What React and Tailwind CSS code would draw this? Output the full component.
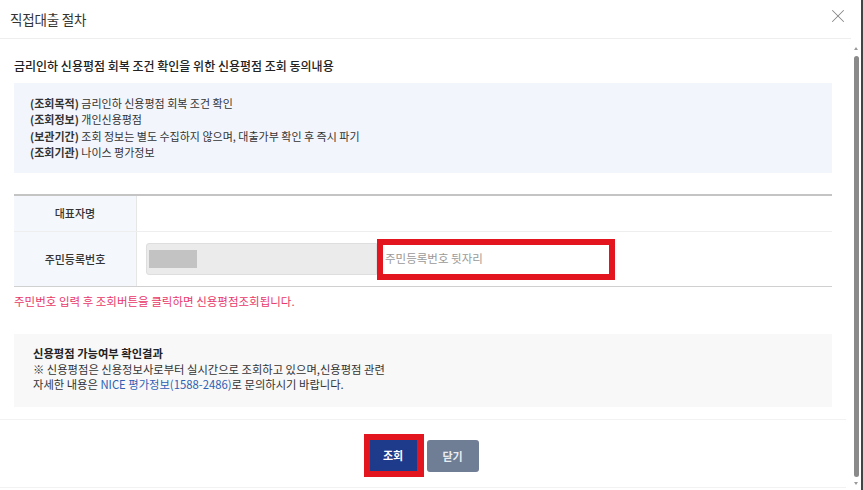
import React from 'react';
import { X } from 'lucide-react';

const infoLines = [
    ['(조회목적)', '금리인하 신용평점 회복 조건 확인'],
    ['(조회정보)', '개인신용평점'],
    ['(보관기간)', '조회 정보는 별도 수집하지 않으며, 대출가부 확인 후 즉시 파기'],
    ['(조회기관)', '나이스 평가정보'],
];

const App = () => {
    return (
        <div className="w-[863px] h-[490px] bg-white flex overflow-hidden text-[#333] font-['Noto_Sans_CJK_KR','Noto_Sans',sans-serif]">
            {/* Modal content */}
            <div className="w-[851px] flex flex-col">
                {/* Header */}
                <div className="h-[39px] shrink-0 flex items-center justify-between pl-[10px] pr-[2px] border-b border-[#eeeeee]">
                    <h2 className="text-[13.5px] text-[#333] tracking-[-0.2px]">직접대출 절차</h2>
                    <X size={22} strokeWidth={1.1} className="text-[#888] -mt-[6px]" />
                </div>

                <div className="flex-1 px-[14px] pr-[19px]">
                    <p className="pt-[18px] text-[12px] leading-[18px] font-medium text-[#222]">
                        금리인하 신용평점 회복 조건 확인을 위한 신용평점 조회 동의내용
                    </p>

                    {/* Info box */}
                    <div className="mt-[8px] h-[90px] bg-[#f2f6fc] pt-[12px] px-[16px] text-[11px] leading-[16.3px] text-[#333]">
                        {infoLines.map(([label, text]) => (
                            <div key={label}>
                                <span className="font-semibold">{label}</span> {text}
                            </div>
                        ))}
                    </div>

                    {/* Table */}
                    <div className="mt-[21px] border-t-2 border-[#c4c4c4] border-b border-b-[#d0d0d0] text-[11px]">
                        <div className="flex h-[36px] border-b border-[#eeeeee]">
                            <div className="w-[123px] shrink-0 bg-[#f4f7fc] border-r border-[#e6e6e6] flex items-center justify-center font-medium">
                                대표자명
                            </div>
                            <div className="flex-1" />
                        </div>
                        <div className="flex h-[54px]">
                            <div className="w-[123px] shrink-0 bg-[#f4f7fc] border-r border-[#e6e6e6] flex items-center justify-center font-medium">
                                주민등록번호
                            </div>
                            <div className="flex-1 flex items-center pl-[9px]">
                                <div className="w-[231px] h-[32px] bg-[#ebebeb] border border-[#dedede] rounded-l-[3px] flex items-center pl-[2px]">
                                    <div className="w-[48px] h-[18px] bg-[#c3c3c3]" />
                                </div>
                                <div className="w-[238px] h-[41px] border-[6px] border-[#e3161f] bg-white flex items-center pl-[2px] text-[#9a9a9a] text-[11.5px]">
                                    주민등록번호 뒷자리
                                </div>
                            </div>
                        </div>
                    </div>

                    <p className="mt-[6px] text-[11.5px] leading-[16px] text-[#e8386a]">
                        주민번호 입력 후 조회버튼을 클릭하면 신용평점조회됩니다.
                    </p>

                    {/* Result box */}
                    <div className="mt-[25px] h-[73px] bg-[#f8f8f8] pt-[12px] px-[19px] text-[11.3px] leading-[15.5px] text-[#333]">
                        <div className="font-bold text-[#222]">신용평점 가능여부 확인결과</div>
                        <div>※ 신용평점은 신용정보사로부터 실시간으로 조회하고 있으며,신용평점 관련</div>
                        <div>
                            자세한 내용은 <span className="text-[#2d5fb4]">NICE 평가정보(1588-2486)</span>로 문의하시기 바랍니다.
                        </div>
                    </div>

                    {/* Footer */}
                    <div className="mt-[12px] border-t border-[#f2f2f2] pt-[14px] pb-[10px] border-b flex justify-center items-start gap-[3px] -mx-[14px] pr-[4px]">
                        <div className="border-[6px] border-[#e3161f] border-r-[7px]">
                            <button className="w-[47px] h-[31px] bg-[#1e3a8a] text-white text-[11px] font-bold">조회</button>
                        </div>
                        <button className="mt-[6px] w-[52px] h-[32px] bg-[#6f7d95] rounded-[3px] text-[#e8ecf2] text-[11px] font-bold">닫기</button>
                    </div>
                </div>
            </div>

            {/* Scrollbar */}
            <div className="w-[10px] flex flex-col items-center pt-[47px] pb-[5px]">
                <div className="w-0 h-0 border-l-[2px] border-r-[2px] border-b-[3px] border-l-transparent border-r-transparent border-b-[#999]" />
                <div className="mt-[6px] w-[5px] flex-1 bg-[#8a8a8a] rounded-full" />
                <div className="mt-[5px] w-0 h-0 border-l-[2px] border-r-[2px] border-t-[3px] border-l-transparent border-r-transparent border-t-[#999]" />
            </div>
            <div className="w-[2px] bg-[#444]" />
        </div>
    );
};

export default App;
